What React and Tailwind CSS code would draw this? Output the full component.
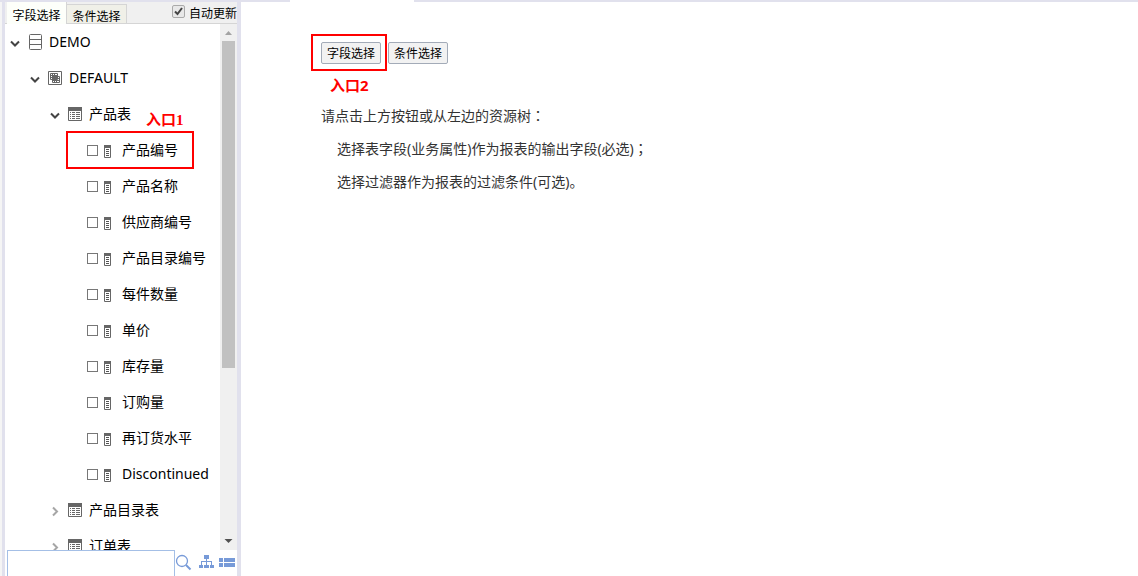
import { useState } from "react";

const fields = [
  "产品编号",
  "产品名称",
  "供应商编号",
  "产品目录编号",
  "每件数量",
  "单价",
  "库存量",
  "订购量",
  "再订货水平",
  "Discontinued",
];

function ArrowDown() {
  return (
    <svg width="10" height="16" viewBox="0 0 10 16" fill="none" stroke="#444" strokeWidth="2">
      <path d="M1 7.5 5 11.5 9 7.5" />
    </svg>
  );
}

function ArrowRight() {
  return (
    <svg width="10" height="16" viewBox="0 0 10 16" fill="none" stroke="#a6a6a6" strokeWidth="2">
      <path d="M3 5.5 7 9.5 3 13.5" />
    </svg>
  );
}

function DatabaseIcon() {
  return (
    <svg className="shrink-0" width="14" height="16" viewBox="0 0 14 16" fill="none" stroke="#666">
      <rect x="1.5" y=".5" width="12" height="15" rx="1" />
      <path d="M2 5.5h11M2 10.5h11" />
    </svg>
  );
}

function SchemaIcon() {
  return (
    <svg className="shrink-0" width="14" height="16" viewBox="0 0 14 16" fill="none" stroke="#666">
      <path d="M.5 1.5h13v13H.5z" />
      <path d="M2.5 3.5h7v6h-7zM3 5.5h6M3 7.5h6M4.5 4v5M6.5 4v5M4.5 6.5h7v6h-7zM5 8.5h6M5 10.5h6M6.5 7v5M8.5 7v5" />
    </svg>
  );
}

function TableIcon() {
  return (
    <svg className="shrink-0" width="14" height="16" viewBox="0 0 14 16">
      <path d="M.5 1.5h13v13H.5z" fill="none" stroke="#666" />
      <path d="M0 1h14v4H0z" fill="#666" />
      <path
        d="M2 6.5h1M4 6.5h3M8 6.5h4M2 8.5h1M4 8.5h3M8 8.5h4M2 10.5h1M4 10.5h3M8 10.5h4M2 12.5h1M4 12.5h3M8 12.5h4"
        stroke="#666"
      />
    </svg>
  );
}

function FieldIcon() {
  return (
    <svg className="shrink-0" width="7" height="16" viewBox="0 0 7 16">
      <path d="M.5 3.5h6v12h-6z" fill="none" stroke="#666" />
      <path d="M0 3h7v3H0z" fill="#666" />
      <path d="M2 7.5h3M2 9.5h3M2 11.5h3M2 13.5h3" stroke="#555" />
    </svg>
  );
}

function TreeNode({ indent, open, icon, label, children }) {
  return (
    <li className={`flex h-9 shrink-0 items-center whitespace-nowrap ${indent}`}>
      <button type="button" aria-label={label} aria-expanded={open} className="mr-2">
        {open ? <ArrowDown /> : <ArrowRight />}
      </button>
      {icon}
      <span className="ml-[7px]">{label}</span>
      {children}
    </li>
  );
}

function FieldNode({ label, children }) {
  return (
    <li className="relative flex h-9 shrink-0 items-center pl-[82px] whitespace-nowrap">
      <label className="flex items-center">
        <input
          type="checkbox"
          className="mr-1.5 size-[11px] appearance-none border border-[#777] bg-white checked:bg-[#777]"
        />
        <FieldIcon />
        <span className="ml-[11px]">{label}</span>
      </label>
      {children}
    </li>
  );
}

function ScrollBar() {
  return (
    <div className="flex w-[17px] shrink-0 flex-col items-center bg-[#f0f0f0]">
      <svg width="17" height="17" viewBox="0 0 17 17" fill="#a3a3a3">
        <path d="M5 11h7L8.5 7z" />
      </svg>
      <div className="h-[327px] w-[13px] bg-[#c1c1c1]" />
      <svg className="mt-auto" width="17" height="17" viewBox="0 0 17 17" fill="#505050">
        <path d="M4.5 6h8L8.5 10z" />
      </svg>
    </div>
  );
}

function Sidebar() {
  const [auto, setAuto] = useState(true);

  return (
    <aside className="flex w-[239px] shrink-0 flex-col overflow-hidden border-r-4 border-l-3 border-[#e1e1ed] bg-white">
      <div className="flex h-[22px] shrink-0 border-b border-[#d5d5d5] bg-[#f0f0f0] pl-0.5 text-xs whitespace-nowrap">
        <button type="button" className="-mb-px w-[60px] border-r border-[#d5d5d5] bg-[#fdfffa] pt-1.5">
          字段选择
        </button>
        <button type="button" className="mt-0.5 w-[60px] border-t border-r border-[#d5d5d5] bg-[#f0f0e8] pt-1">
          条件选择
        </button>
        <label className="ml-auto flex items-center">
          <span className="relative mr-1 mb-0.5 size-[13px]">
            <input
              type="checkbox"
              checked={auto}
              onChange={(e) => setAuto(e.target.checked)}
              className="block size-[13px] appearance-none rounded-xs border border-[#aaa] bg-[#e8e8e8]"
            />
            {auto && (
              <svg
                className="pointer-events-none absolute inset-0"
                width="13"
                height="13"
                viewBox="0 0 13 13"
                fill="none"
                stroke="#444"
                strokeWidth="2"
              >
                <path d="M3 6.5 5.5 9 10 3" />
              </svg>
            )}
          </span>
          <span className="pt-0.5">自动更新</span>
        </label>
      </div>

      <div className="flex min-h-0 flex-1">
        <ul className="flex min-w-0 flex-1 flex-col overflow-hidden text-sm text-black">
          <TreeNode indent="pl-[5px]" open icon={<DatabaseIcon />} label="DEMO" />
          <TreeNode indent="pl-[25px]" open icon={<SchemaIcon />} label="DEFAULT" />
          <TreeNode indent="pl-[45px]" open icon={<TableIcon />} label="产品表">
            <span className="mt-3 ml-[15px] text-[15px] font-bold text-[#f00]">
              入口<span className="font-['Liberation_Serif',serif]">1</span>
            </span>
          </TreeNode>
          {fields.map((name, i) => (
            <FieldNode key={name} label={name}>
              {i === 0 && (
                <span className="pointer-events-none absolute -top-px left-[61px] h-[38px] w-32 border-2 border-[#f00]" />
              )}
            </FieldNode>
          ))}
          <TreeNode indent="pl-[45px]" open={false} icon={<TableIcon />} label="产品目录表" />
          <TreeNode indent="pl-[45px]" open={false} icon={<TableIcon />} label="订单表" />
        </ul>
        <ScrollBar />
      </div>

      <div className="flex h-[26px] shrink-0 pl-0.5">
        <input
          type="text"
          aria-label="搜索"
          className="h-7 w-[168px] shrink-0 border border-[#a4bfe6] px-1 text-sm outline-none"
        />
        <div className="flex flex-1 items-start pt-1 text-[#779ad8]">
          <button type="button" aria-label="搜索">
            <svg width="18" height="18" viewBox="0 0 18 18" fill="none" stroke="currentColor">
              <circle cx="7" cy="7" r="5.5" strokeWidth="1.3" />
              <path d="M11 11l4.5 4.5" strokeWidth="2" />
            </svg>
          </button>
          <button type="button" aria-label="层级" className="ml-1.5">
            <svg width="15" height="18" viewBox="0 0 15 18" fill="currentColor" shapeRendering="crispEdges">
              <path d="M5 1h5v4H5zM7 5h1v2h5v4h-1V8H8v3H7V8H3v3H2V7h5zM0 11h4v3H0zM5 11h5v3H5zM11 11h4v3h-4z" />
            </svg>
          </button>
          <button type="button" aria-label="列表" className="ml-[5px]">
            <svg width="16" height="18" viewBox="0 0 16 18" fill="currentColor" shapeRendering="crispEdges">
              <path d="M0 4h4v4H0zM5 4h11v4H5zM0 9h4v4H0zM5 9h11v4H5z" />
            </svg>
          </button>
        </div>
      </div>
    </aside>
  );
}

function ActionButton({ children }) {
  return (
    <button
      type="button"
      className="h-[22px] w-[60px] rounded-xs border border-[#a3abb8] bg-[#f2f2f2] pt-px text-xs text-black"
    >
      {children}
    </button>
  );
}

function Mark({ children }) {
  return (
    <span className="font-['Noto_Sans_CJK_TC',sans-serif]" lang="zh-TW">
      {children}
    </span>
  );
}

export default function App() {
  return (
    <div className="flex h-screen flex-col overflow-hidden bg-white font-['Noto_Sans','Noto_Sans_CJK_SC',sans-serif]">
      <div className="flex h-0.5 shrink-0">
        <div className="w-[290px] bg-[#e1e1ed]" />
        <div className="w-[124px]" />
        <div className="flex-1 bg-[#e1e1ed]" />
      </div>
      <div className="flex min-h-0 flex-1">
        <div className="w-0.5 shrink-0 bg-[#f5f5f5]" />
        <Sidebar />
        <main className="min-w-0 flex-1 pt-8 pl-[70px] text-sm text-[#333]">
          <div className="flex items-start">
            <div className="flex border-2 border-[#f00] pt-1.5 pr-1 pb-[5px] pl-2">
              <ActionButton>字段选择</ActionButton>
            </div>
            <div className="ml-px flex pt-2">
              <ActionButton>条件选择</ActionButton>
            </div>
          </div>
          <p className="mt-1 ml-[19px] text-[15px] leading-5 font-bold text-[#f00]">入口2</p>
          <div className="mt-1 ml-[10px] leading-[33px]">
            <p>
              请点击上方按钮或从左边的资源树<Mark>：</Mark>
            </p>
            <p className="pl-4">
              选择表字段(业务属性)作为报表的输出字段(必选)<Mark>；</Mark>
            </p>
            <p className="pl-4">选择过滤器作为报表的过滤条件(可选)。</p>
          </div>
        </main>
      </div>
    </div>
  );
}
